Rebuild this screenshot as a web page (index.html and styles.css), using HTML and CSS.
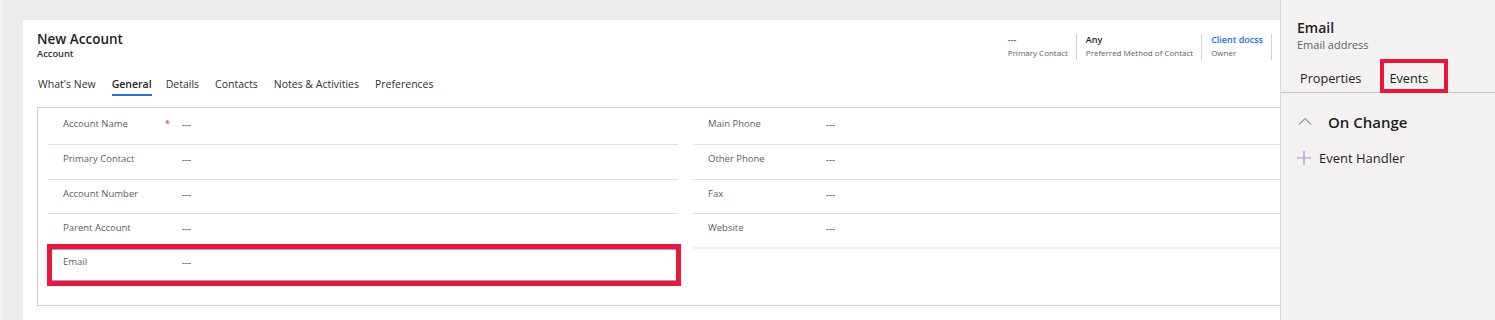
FILE: index.html
```html
<!DOCTYPE html>
<html lang="en">
<head>
<meta charset="utf-8">
<title>New Account</title>
<link rel="stylesheet" href="styles.css">
</head>
<body>
<div class="app">
  <main class="main">
    <section class="card">
      <header class="card-header">
        <div class="title-block">
          <div class="title">New Account</div>
          <div class="subtitle">Account</div>
        </div>
        <div class="head-fields">
          <div class="head-field">
            <div class="hf-value">---</div>
            <div class="hf-label">Primary Contact</div>
          </div>
          <div class="head-field">
            <div class="hf-value strong">Any</div>
            <div class="hf-label">Preferred Method of Contact</div>
          </div>
          <div class="head-field">
            <div class="hf-value link">Client docss</div>
            <div class="hf-label">Owner</div>
          </div>
        </div>
      </header>
      <nav class="tabs">
        <span class="tab">What's New</span>
        <span class="tab active">General</span>
        <span class="tab">Details</span>
        <span class="tab">Contacts</span>
        <span class="tab">Notes &amp; Activities</span>
        <span class="tab">Preferences</span>
      </nav>
      <div class="section">
        <div class="col">
          <div class="row"><div class="lbl">Account Name<span class="req">*</span></div><div class="val">---</div></div>
          <div class="row"><div class="lbl">Primary Contact</div><div class="val">---</div></div>
          <div class="row"><div class="lbl">Account Number</div><div class="val">---</div></div>
          <div class="row"><div class="lbl">Parent Account</div><div class="val">---</div></div>
          <div class="row selected"><div class="lbl">Email</div><div class="val">---</div></div>
        </div>
        <div class="col right">
          <div class="row"><div class="lbl">Main Phone</div><div class="val">---</div></div>
          <div class="row"><div class="lbl">Other Phone</div><div class="val">---</div></div>
          <div class="row"><div class="lbl">Fax</div><div class="val">---</div></div>
          <div class="row last"><div class="lbl">Website</div><div class="val">---</div></div>
        </div>
      </div>
    </section>
  </main>
  <aside class="panel">
    <div class="p-title">Email</div>
    <div class="p-sub">Email address</div>
    <div class="p-tabs">
      <span class="p-tab">Properties</span>
      <span class="p-tab current">Events</span>
    </div>
    <div class="p-group">
      <svg class="chev" width="14" height="8" viewBox="0 0 14 8"><polyline points="1,7.5 7,1.5 13,7.5" fill="none" stroke="#605e5c" stroke-width="1"/></svg>
      <span class="p-group-title">On Change</span>
    </div>
    <div class="p-add">
      <svg class="plus" width="14" height="14" viewBox="0 0 14 14"><path d="M7 0V14M0 7H14" stroke="#9c99c4" stroke-width="1.2" fill="none"/></svg>
      <span>Event Handler</span>
    </div>
  </aside>
</div>
</body>
</html>
```
FILE: styles.css
```css
* { box-sizing: border-box; }
html, body { margin: 0; padding: 0; }
body {
  background: #edebe9;
  border-left: 3px solid #f3f2f1;
  font-family: "Segoe UI", "Open Sans", "Noto Sans", sans-serif;
  color: #201f1e;
  width: 1495px;
  height: 320px;
  overflow: hidden;
}
.app { display: flex; height: 320px; }
.main { flex: 1; padding: 20px 0 0 20px; min-width: 0; }
.card {
  background: #fff;
  height: 300px;
  padding-left: 14px;
  overflow: hidden;
}
.card-header {
  display: flex;
  justify-content: space-between;
  align-items: flex-start;
  padding-right: 8px;
}
.title-block { padding-top: 9px; }
.title { font-size: 13.5px; font-weight: 600; line-height: 20px; color: #201f1e; }
.subtitle { font-size: 9.3px; font-weight: 600; line-height: 10px; color: #323130; }
.head-fields { display: flex; margin-top: 14px; }
.head-field {
  height: 26px;
  padding: 0 8px 0 9px;
  border-right: 1px solid #d2d0ce;
}
.head-field:first-child { padding-left: 0; }
.hf-value { font-size: 9px; line-height: 12px; color: #323130; }
.hf-value.strong { font-weight: 600; color: #201f1e; }
.hf-value.link { font-weight: 600; color: #1f6bf0; }
.hf-label { font-size: 8px; line-height: 13px; color: #605e5c; white-space: nowrap; }
.tabs { display: flex; margin-top: 16px; padding-left: 1px; }
.tab {
  font-size: 10.5px;
  line-height: 16px;
  padding-bottom: 2px;
  border-bottom: 2px solid transparent;
  margin-right: 16px;
  color: #323130;
}
.tab.active { font-weight: 600; border-bottom-color: #2f6ee0; margin-right: 14px; color: #201f1e; }
.section {
  margin-top: 11px;
  border: 1px solid #d2d0ce;
  border-right: none;
  height: 199px;
  padding: 2px 0 0 10px;
  display: grid;
  grid-template-columns: 630px 630px;
  column-gap: 15px;
  align-items: start;
}
.row {
  display: grid;
  grid-template-columns: 119px 1fr;
  height: 35px;
  padding: 8px 0 0 15px;
  border-bottom: 1px solid #e1dfdd;
  font-size: 9.5px;
  line-height: 12px;
}
.row:nth-child(3) { height: 34px; }
.col.right .row { grid-template-columns: 118px 1fr; }
.row.last { border-bottom: 2px solid #efeeed; }
.lbl { color: #605e5c; display: flex; justify-content: space-between; padding-right: 12px; }
.req { color: #c4314b; font-size: 9px; }
.val { color: #323130; padding-top: 1px; }
.row.selected {
  position: relative;
  height: 32px;
  padding-top: 6px;
  border-top: 1px solid #a39dd3;
  border-bottom: 1px solid #a39dd3;
}
.row.selected::after {
  content: "";
  position: absolute;
  left: -1px;
  right: -3px;
  top: -6px;
  bottom: -6px;
  border: 5px solid #e8173b;
}
.panel {
  width: 215px;
  flex: none;
  background: #f3f2f1;
  border-left: 1px solid #dcdad8;
}
.p-title { font-size: 14px; font-weight: 600; line-height: 20px; padding: 18px 0 0 16px; }
.p-sub { font-size: 11px; line-height: 14px; color: #605e5c; padding-left: 16px; }
.p-tabs {
  display: flex;
  margin-top: 17px;
  padding-left: 19px;
  border-bottom: 1px solid #c8c6c4;
}
.p-tab { font-size: 12.7px; line-height: 18px; padding-bottom: 5px; margin-right: 28px; color: #201f1e; position: relative; }
.p-tab.current::after {
  content: "";
  position: absolute;
  left: -9px;
  right: -20px;
  top: -10px;
  bottom: -1px;
  border: 4px solid #e8173b;
}
.p-group { display: flex; align-items: center; margin-top: 19px; padding-left: 17px; height: 20px; }
.chev { margin-right: 16px; margin-top: -3px; }
.p-group-title { font-size: 15px; font-weight: 600; line-height: 20px; }
.p-add { display: flex; align-items: center; margin-top: 17px; padding-left: 16px; font-size: 13px; line-height: 18px; }
.plus { margin-right: 8px; }
```
